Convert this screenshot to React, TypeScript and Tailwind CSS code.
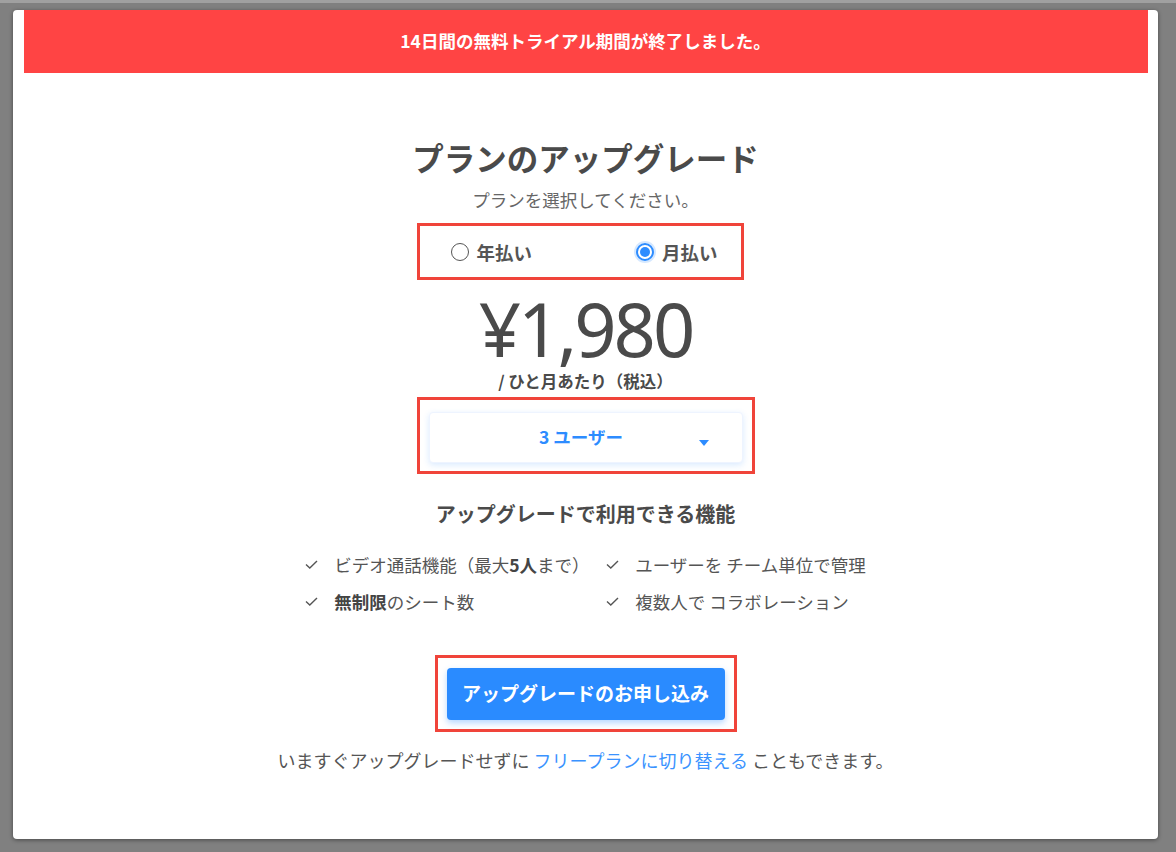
import { useState } from "react";

const jp = { fontFamily: '"Noto Sans CJK JP", "Noto Sans", sans-serif' };

function CheckMark() {
  return (
    <svg width="13" height="9" viewBox="0 0 13 9" className="shrink-0">
      <path d="M1 4.5 L4.8 8 L12 1" fill="none" stroke="#555" strokeWidth="1.4" />
    </svg>
  );
}

function Radio({ checked, label, onClick }: { checked: boolean; label: string; onClick: () => void }) {
  return (
    <button onClick={onClick} className="flex items-center gap-[8px]">
      {checked ? (
        <span className="w-[18px] h-[18px] rounded-full border-2 border-[#2d8cff] flex items-center justify-center shadow-[0_0_0_2px_rgba(45,140,255,0.2)]">
          <span className="w-[10px] h-[10px] rounded-full bg-[#2d8cff]" />
        </span>
      ) : (
        <span className="w-[18px] h-[18px] rounded-full border border-[#555]" />
      )}
      <span className="text-[18.5px] font-bold text-[#555] leading-[24px]">{label}</span>
    </button>
  );
}

export default function App() {
  const [plan, setPlan] = useState<"year" | "month">("month");

  return (
    <div style={jp} className="w-[1176px] h-[852px] bg-[#808080] border-t-[3px] border-[#a0a0a0] overflow-hidden">
      <div className="ml-[13px] mt-[7px] w-[1145px] h-[829px] bg-white rounded-[4px] shadow-[0_1px_4px_rgba(0,0,0,0.45)] flex flex-col items-center">
        {/* banner */}
        <div className="w-[1124px] h-[63px] bg-[#ff4444] flex items-center justify-center">
          <span className="text-white text-[17.5px] font-bold">14日間の無料トライアル期間が終了しました。</span>
        </div>

        <h1 className="mt-[64px] text-[31.5px] leading-[40px] font-bold text-[#4a4a4a]">プランのアップグレード</h1>
        <p className="mt-[11px] text-[17.5px] leading-[24px] text-[#666]">プランを選択してください。</p>

        {/* billing cycle */}
        <div className="mt-[11px] ml-[-11px] w-[327px] h-[57px] border-[3px] border-[#f0443a] flex items-center pl-[31px] gap-[104px]">
          <Radio checked={plan === "year"} label="年払い" onClick={() => setPlan("year")} />
          <Radio checked={plan === "month"} label="月払い" onClick={() => setPlan("month")} />
        </div>

        <div
          style={{ fontFamily: '"Noto Sans", sans-serif' }}
          className="mt-[17px] text-[74px] leading-[64px] tracking-[-3px] text-[#4a4a4a]"
        >
          ¥1,980
        </div>
        <p className="mt-[10px] text-[16.5px] leading-[20px] font-bold text-[#4a4a4a]">/ ひと月あたり（税込）</p>

        {/* users select */}
        <div className="mt-[6px] w-[338px] h-[77px] border-[3px] border-[#f0443a] px-[9px] pt-[12px] pb-[8px]">
          <div className="relative h-[51px] rounded-[4px] bg-white border border-[#eef4ff] shadow-[0_2px_6px_rgba(45,140,255,0.18)] flex items-center justify-center pr-[9px]">
            <span className="text-[17.5px] font-bold text-[#2d8cff]">3 ユーザー</span>
            <svg width="10" height="6" viewBox="0 0 10 6" className="absolute right-[33px] top-[27px]">
              <path d="M0 0 H10 L5 6 Z" fill="#2d8cff" />
            </svg>
          </div>
        </div>

        <h2 className="mt-[27px] text-[20px] leading-[26px] font-bold text-[#4a4a4a]">アップグレードで利用できる機能</h2>

        <div className="mt-[19px] grid grid-cols-[274px_auto] gap-x-[27px] text-[17.5px] leading-[37px] text-[#555] whitespace-nowrap">
          <div className="flex items-center gap-[16px]">
            <CheckMark />
            <span>
              ビデオ通話機能（最大<b className="text-[#444]">5人</b>まで）
            </span>
          </div>
          <div className="flex items-center gap-[16px]">
            <CheckMark />
            <span>ユーザーを チーム単位で管理</span>
          </div>
          <div className="flex items-center gap-[16px]">
            <CheckMark />
            <span>
              <b className="text-[#444]">無制限</b>のシート数
            </span>
          </div>
          <div className="flex items-center gap-[16px]">
            <CheckMark />
            <span>複数人で コラボレーション</span>
          </div>
        </div>

        {/* cta */}
        <div className="mt-[35px] w-[302px] h-[77px] border-[3px] border-[#f0443a] flex items-center justify-center">
          <button className="w-[278px] h-[52px] rounded-[4px] bg-[#2a8bff] text-white text-[19px] font-bold shadow-[0_3px_6px_rgba(42,139,255,0.35)]">
            アップグレードのお申し込み
          </button>
        </div>

        <p className="mt-[16px] text-[18px] leading-[24px] text-[#555]">
          いますぐアップグレードせずに <a className="text-[#3a93ff]">フリープランに切り替える</a> こともできます。
        </p>
      </div>
    </div>
  );
}
